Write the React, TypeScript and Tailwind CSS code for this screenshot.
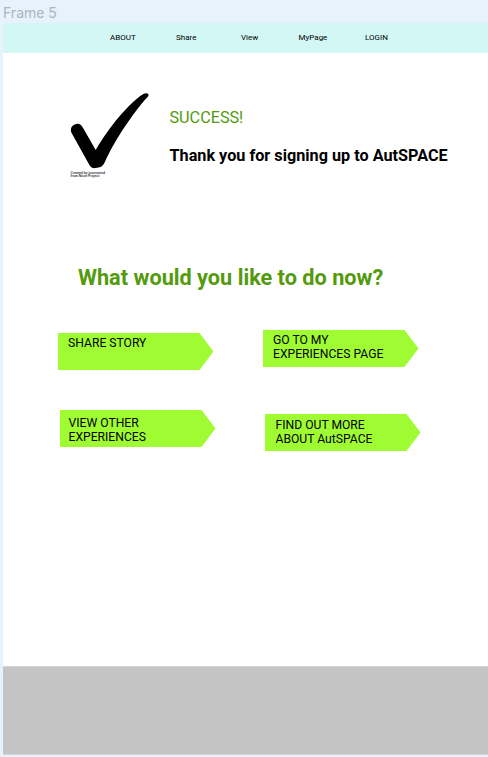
const navItems = [
  { label: 'ABOUT', cell: 'w-[66px]' },
  { label: 'Share', cell: 'w-[65px]' },
  { label: 'View', cell: 'w-[57.5px]' },
  { label: 'MyPage', cell: 'w-[66.5px]' },
  { label: 'LOGIN', cell: 'w-[40px]' },
];

const actions = [
  { lines: ['SHARE STORY'], place: 'mt-[3px]', pad: 'pl-[10.5px] pt-[3px]' },
  { lines: ['GO TO MY', 'EXPERIENCES PAGE'], place: 'ml-[205px]', pad: 'pl-[10.5px] pt-[3px]' },
  { lines: ['VIEW OTHER', 'EXPERIENCES'], place: 'ml-[2px]', pad: 'pl-[9px] pt-[6px]' },
  { lines: ['FIND OUT MORE', 'ABOUT AutSPACE'], place: 'ml-[207px] mt-[4px]', pad: 'pl-[11px] pt-[4px]' },
];

function Arrow({ lines, place, pad }: { lines: string[]; place: string; pad: string }) {
  return (
    <a
      className={`col-start-1 row-start-1 block h-[37px] w-[156px] bg-[#a0fc32] text-left text-[12.15px] leading-[14px] text-black [clip-path:polygon(0_0,142px_0,100%_50%,142px_100%,0_100%)] ${place} ${pad}`}
    >
      {lines.map((line) => (
        <span key={line} className="block whitespace-nowrap">
          {line}
        </span>
      ))}
    </a>
  );
}

export default function App() {
  return (
    <div className="h-[757px] w-[488px] overflow-hidden bg-[#e7f2fc] pl-[3px] font-[Roboto,sans-serif] text-black">
      <div className="h-[23px] pt-[4px] font-[Inter,sans-serif] text-[14px] leading-[17px] text-[#a9b5bf]">
        Frame 5
      </div>
      <div className="flex h-[732px] flex-col bg-white">
        <nav className="flex h-[30px] shrink-0 bg-[#d3f7f5] pl-[107px] text-[8px] leading-[30px]">
          {navItems.map((item) => (
            <a key={item.label} className={item.cell}>
              {item.label}
            </a>
          ))}
        </nav>

        <section className="flex h-[210px] shrink-0 pl-[67px] pt-[40px]">
          <div className="w-[99.5px]">
            <svg viewBox="0 0 80 77" className="block h-[77px] w-[80px]" aria-hidden="true">
              <path
                d="M78 .8C77.2 -.1 75.2 -.1 73.4 .9C68 4 62 9.8 57.5 14.5C49 23.5 41 33.2 35 42.3C31.5 47.5 28.5 52 25.7 57L12.8 34.6C11 30.8 7.8 29.8 4.6 31.6C1 33.5 -.1 36.6 1.6 40L19 71.3C20.6 74.4 22.3 75.4 25.4 75.1C30.2 74.8 33 73.2 34.4 70C37 64 39.5 59 42.6 53.4C49 42 55.5 32.5 63 22C68 15.2 73 8.5 77.6 4C78.7 2.8 78.8 1.7 78 .8Z"
                fill="#000"
              />
            </svg>
            <p className="mt-[1.5px] whitespace-nowrap pl-[0.5px] font-['Liberation_Sans',sans-serif] text-[3.3px] font-bold leading-[3.5px] text-[#333]">
              Created by iconsmind
              <br />
              from Noun Project
            </p>
          </div>
          <div className="pt-[15px]">
            <p className="text-[16.2px] leading-[20px] text-[#539a0c]">SUCCESS!</p>
            <h1 className="mt-[18px] whitespace-nowrap text-[16.23px] font-bold leading-[20px]">
              Thank you for signing up to AutSPACE
            </h1>
          </div>
        </section>

        <h2 className="h-[67px] shrink-0 whitespace-nowrap pl-[75px] text-[21.7px] font-bold leading-[30px] text-[#539a0c]">
          What would you like to do now?
        </h2>

        <main className="flex grow flex-col gap-[40px] pl-[54.5px]">
          <div className="grid items-start">
            <Arrow {...actions[0]} />
            <Arrow {...actions[1]} />
          </div>
          <div className="grid items-start">
            <Arrow {...actions[2]} />
            <Arrow {...actions[3]} />
          </div>
        </main>

        <footer className="h-[89px] shrink-0 border-y border-[#d3d5d6] bg-[#c4c4c4]" />
      </div>
    </div>
  );
}
